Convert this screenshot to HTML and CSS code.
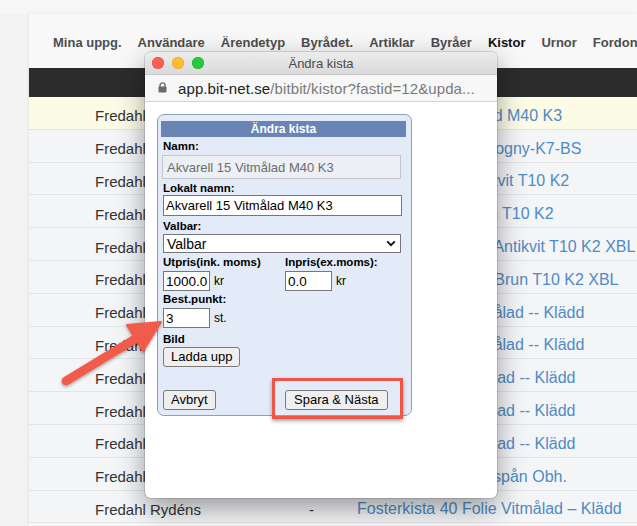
FILE: index.html
```html
<!DOCTYPE html>
<html lang="sv">
<head>
<meta charset="utf-8">
<title>Ändra kista</title>
<link rel="stylesheet" href="styles.css">
</head>
<body>
<div class="page">
  <div class="topstrip"></div>
  <div class="layout">
    <div class="side"></div>
    <div class="main">
      <nav class="nav">
        <span>Mina uppg.</span>
        <span>Användare</span>
        <span>Ärendetyp</span>
        <span>Byrådet.</span>
        <span>Artiklar</span>
        <span>Byråer</span>
        <span class="active">Kistor</span>
        <span>Urnor</span>
        <span>Fordon</span>
      </nav>
      <div class="darkbar"></div>
      <div class="rows">
        <div class="row hl"><span class="c1">Fredahl Rydéns</span><span class="c2">-</span><span class="c3">Akvarell 15 Vitmålad M40 K3</span></div>
        <div class="row"><span class="c1">Fredahl Rydéns</span><span class="c2">-</span><span class="c3">Akvarell 15 XL Mahogny-K7-BS</span></div>
        <div class="row"><span class="c1">Fredahl Rydéns</span><span class="c2">-</span><span class="c3">Akvarell 15 L1 Antikvit T10 K2</span></div>
        <div class="row"><span class="c1">Fredahl Rydéns</span><span class="c2">-</span><span class="c3">Akvarell 15 XL Brun T10 K2</span></div>
        <div class="row"><span class="c1">Fredahl Rydéns</span><span class="c2">-</span><span class="c3">Akvarell 15 Lux XL Antikvit T10 K2 XBL</span></div>
        <div class="row"><span class="c1">Fredahl Rydéns</span><span class="c2">-</span><span class="c3">Akvarell 15 Lux XL Brun T10 K2 XBL</span></div>
        <div class="row"><span class="c1">Fredahl Rydéns</span><span class="c2">-</span><span class="c3">Fosterkista 40 Vitmålad -- Klädd</span></div>
        <div class="row"><span class="c1">Fredahl Rydéns</span><span class="c2">-</span><span class="c3">Fosterkista 40 Vitmålad -- Klädd</span></div>
        <div class="row"><span class="c1">Fredahl Rydéns</span><span class="c2">-</span><span class="c3">Fosterkista 4 Vitmålad -- Klädd</span></div>
        <div class="row"><span class="c1">Fredahl Rydéns</span><span class="c2">-</span><span class="c3">Fosterkista 4 Vitmålad -- Klädd</span></div>
        <div class="row"><span class="c1">Fredahl Rydéns</span><span class="c2">-</span><span class="c3">Fosterkista 4 Vitmålad -- Klädd</span></div>
        <div class="row"><span class="c1">Fredahl Rydéns</span><span class="c2">-</span><span class="c3">Fosterkista 4 Hyvelspån Obh.</span></div>
        <div class="row"><span class="c1">Fredahl Rydéns</span><span class="c2">-</span><span class="c3">Fosterkista 40 Folie Vitmålad – Klädd</span></div>
      </div>
    </div>
  </div>

  <div class="popup">
    <div class="titlebar">
      <div class="lights"><i class="red"></i><i class="yellow"></i><i class="green"></i></div>
      <div class="title">Ändra kista</div>
    </div>
    <div class="urlbar">
      <svg class="lock" width="9" height="11" viewBox="0 0 9 11"><path d="M2 5V3.4a2.5 2.5 0 0 1 5 0V5" fill="none" stroke="#6b6b6b" stroke-width="1.4"/><rect x="0.5" y="4.6" width="8" height="6" rx="1" fill="#6b6b6b"/></svg>
      <span class="url"><span class="host">app.bit-net.se</span>/bitbit/kistor?fastid=12&amp;upda...</span>
    </div>
    <div class="content">
      <form class="panel">
        <div class="phead">Ändra kista</div>
        <div class="pbody">
          <label class="lbl">Namn:</label>
          <input class="inp wide disabled" type="text" value="Akvarell 15 Vitmålad M40 K3" disabled>
          <label class="lbl">Lokalt namn:</label>
          <input class="inp wide lokalt" type="text" value="Akvarell 15 Vitmålad M40 K3">
          <label class="lbl l3">Valbar:</label>
          <div class="select"><span>Valbar</span><svg width="10" height="7" viewBox="0 0 10 7"><path d="M1.2 1.3 5 5.1 8.8 1.3" fill="none" stroke="#111" stroke-width="1.9"/></svg></div>
          <div class="cols">
            <div class="col">
              <label class="lbl">Utpris(ink. moms)</label>
              <div class="unitline"><input class="inp small" type="text" value="1000.0"><span class="unit">kr</span></div>
            </div>
            <div class="col">
              <label class="lbl">Inpris(ex.moms):</label>
              <div class="unitline"><input class="inp small" type="text" value="0.0"><span class="unit">kr</span></div>
            </div>
          </div>
          <label class="lbl l1">Best.punkt:</label>
          <div class="unitline"><input class="inp small" type="text" value="3"><span class="unit">st.</span></div>
          <label class="lbl l4">Bild</label>
          <div class="btnline"><button type="button" class="btn">Ladda upp</button></div>
          <div class="actions">
            <div class="col"><button type="button" class="btn">Avbryt</button></div>
            <div class="col"><span class="marked"><button type="button" class="btn">Spara &amp; Nästa</button></span></div>
          </div>
        </div>
      </form>
    </div>
  </div>

  <svg class="arrow" width="637" height="526" viewBox="0 0 637 526">
    <defs>
      <filter id="sh" x="-20%" y="-20%" width="140%" height="140%">
        <feDropShadow dx="0" dy="1.5" stdDeviation="1.5" flood-color="#000" flood-opacity="0.35"/>
      </filter>
    </defs>
    <g filter="url(#sh)" fill="#f25a49" stroke="#f25a49">
      <line x1="66" y1="381" x2="140" y2="336" stroke-width="9" stroke-linecap="round"/>
      <polygon points="161,322 127,325 143,351" stroke-width="2" stroke-linejoin="round"/>
    </g>
  </svg>
</div>
</body>
</html>
```

FILE: styles.css
```css
* { box-sizing: border-box; }
html, body { margin: 0; padding: 0; }
body {
  width: 637px;
  height: 526px;
  overflow: hidden;
  background: #f4f4f4;
  font-family: "Liberation Sans", Arial, sans-serif;
}
.page {
  position: relative;
  width: 637px;
  height: 526px;
  overflow: hidden;
}
.topstrip {
  height: 14px;
  background: #f6f6f6;
}
.layout {
  display: flex;
  height: 512px;
}
.side {
  width: 29px;
  background: #f3f3f3;
  flex: none;
}
.main {
  flex: 1;
  background: #f8f8f8;
  box-shadow: -1px 0 3px rgba(0,0,0,0.06);
  display: flex;
  flex-direction: column;
}
.nav {
  height: 54px;
  display: flex;
  align-items: center;
  gap: 16px;
  padding-left: 24px;
  padding-top: 2px;
  font-weight: bold;
  font-size: 13px;
  color: #4d4d4d;
  white-space: nowrap;
}
.nav .active { color: #111; }
.darkbar {
  height: 29px;
  background: #2c2c2c;
}
.rows {
  background: #f4f5f7;
}
.row {
  height: 32.8px;
  display: flex;
  align-items: center;
  padding-top: 6px;
  border-bottom: 1px solid #e2e3e5;
  white-space: nowrap;
}
.row.hl { background: #fcfce6; }
.c1 { width: 280px; padding-left: 66px; flex: none; color: #333; font-size: 15px; }
.c2 { width: 48px; flex: none; color: #333; font-size: 15px; }
.c3 { color: #4f8bc4; font-size: 16px; }

/* popup window */
.popup {
  position: absolute;
  left: 145px;
  top: 52px;
  width: 352px;
  height: 446px;
  border-radius: 6px;
  overflow: hidden;
  background: #fff;
  box-shadow: 0 10px 28px rgba(0,0,0,0.38), 0 0 0 1px rgba(0,0,0,0.12);
  display: flex;
  flex-direction: column;
}
.titlebar {
  height: 23px;
  flex: none;
  background: linear-gradient(#ececec, #dadada);
  border-bottom: 1px solid #c9c9c9;
  position: relative;
  display: flex;
  align-items: center;
  justify-content: center;
}
.lights {
  position: absolute;
  left: 7px;
  top: 5px;
  display: flex;
  gap: 8px;
}
.lights i {
  display: block;
  width: 12px;
  height: 12px;
  border-radius: 50%;
}
.lights .red { background: #fd5f57; box-shadow: inset 0 0 0 0.5px #e0443e; }
.lights .yellow { background: #febc2e; box-shadow: inset 0 0 0 0.5px #dea123; }
.lights .green { background: #28c840; box-shadow: inset 0 0 0 0.5px #1aab29; }
.title {
  font-size: 13px;
  color: #4b4b4b;
}
.urlbar {
  height: 27px;
  flex: none;
  background: #f7f7f7;
  border-bottom: 1px solid #d5d5d5;
  display: flex;
  align-items: center;
  padding-left: 13px;
  gap: 11px;
}
.lock { flex: none; margin-top: -1px; }
.url {
  font-size: 15px;
  color: #7a7a7a;
  white-space: nowrap;
  letter-spacing: 0.1px;
}
.url .host { color: #222; }
.content {
  flex: 1;
  padding: 12px 0 0 12px;
}

/* form panel */
.panel {
  width: 255px;
  height: 302px;
  border: 1px solid #8ba0bb;
  border-radius: 7px;
  background: #e2ebf7;
  padding: 6px 5px 0 3px;
  margin: 0;
}
.phead {
  height: 16px;
  background: #6a84b6;
  color: #fff;
  font-weight: bold;
  font-size: 12px;
  text-align: center;
  line-height: 16px;
}
.pbody {
  padding-left: 2px;
  display: flex;
  flex-direction: column;
  align-items: flex-start;
}
.lbl {
  display: block;
  font-weight: bold;
  font-size: 11.5px;
  line-height: 14px;
  color: #000;
  margin-top: 2px;
}
.lbl.l3 { margin-top: 3px; }
.lbl.l1 { margin-top: 1px; }
.lbl.l4 { margin-top: 4px; }
.inp {
  font-family: "Liberation Sans", Arial, sans-serif;
  font-size: 13px;
  color: #000;
  background: #fff;
  border: 1px solid #777;
  border-radius: 0;
  padding: 0 2px;
  margin: 2px 0 0 0;
  outline: none;
}
.inp.wide { width: 239px; }
.inp.disabled {
  height: 24px;
  margin-left: -1px;
  background: #eceff3;
  border-color: #c3c6cb;
  color: #6d6d6d;
  padding: 0 4px;
}
.inp.lokalt { height: 21px; margin-top: 0; }
.select {
  margin-top: 1px;
  width: 238px;
  height: 19px;
  background: #fff;
  border: 1px solid #777;
  display: flex;
  align-items: center;
  justify-content: space-between;
  padding: 0 4px 0 3px;
  font-size: 14px;
}
.cols, .actions {
  display: flex;
  width: 100%;
}
.cols .col, .actions .col { width: 122px; flex: none; }
.unitline {
  display: flex;
  align-items: center;
  margin-top: 2px;
}
.inp.small {
  width: 47px;
  height: 20px;
  margin: 0;
  font-size: 13.5px;
}
.unit {
  font-size: 12px;
  margin-left: 4px;
  color: #000;
}
.btnline { margin-top: 1px; }
.btn {
  font-family: "Liberation Sans", Arial, sans-serif;
  font-size: 13px;
  color: #000;
  background: #efefef;
  border: 1px solid #7a7a7a;
  border-radius: 3px;
  height: 20px;
  padding: 0 7px;
  margin: 0;
  line-height: 18px;
}
.actions { margin-top: 23px; }
.marked {
  position: relative;
  display: inline-block;
  vertical-align: top;
}
.marked .btn { padding: 0 8px; }
.marked::after {
  content: "";
  position: absolute;
  left: -13px;
  right: -15px;
  top: -12px;
  bottom: -9px;
  border: 3px solid #f25546;
  box-shadow: 0 2px 4px rgba(0,0,0,0.35);
  pointer-events: none;
}
.arrow {
  position: absolute;
  left: 0;
  top: 0;
  pointer-events: none;
}
```
